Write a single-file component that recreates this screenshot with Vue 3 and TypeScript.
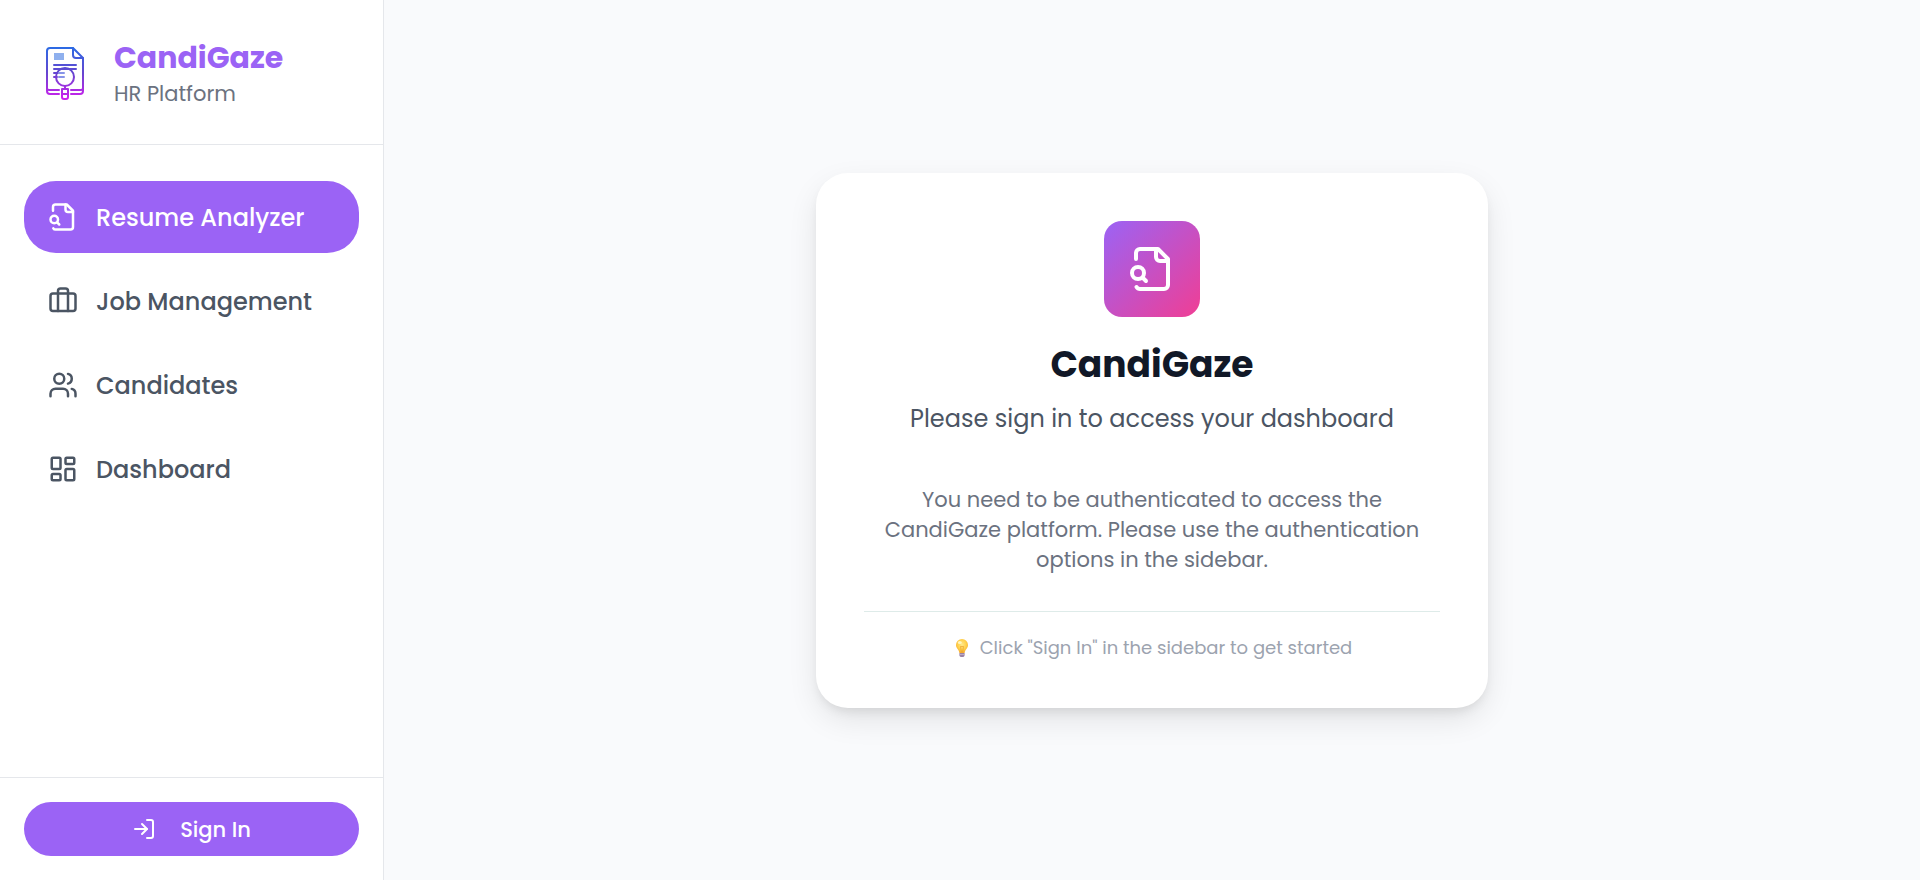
<script setup lang="ts">
type NavItem = { label: string; icon: string; active: boolean }

const navItems: NavItem[] = [
  { label: 'Resume Analyzer', icon: 'search', active: true },
  { label: 'Job Management', icon: 'case', active: false },
  { label: 'Candidates', icon: 'people', active: false },
  { label: 'Dashboard', icon: 'grid', active: false },
]
</script>

<template>
  <div class="layout">
    <aside class="sidebar">
      <header class="brand">
        <svg class="logo" viewBox="0 0 60 60" fill="none" stroke-linecap="round" stroke-linejoin="round" aria-hidden="true">
          <defs>
            <linearGradient id="logo-stroke" gradientUnits="userSpaceOnUse" x1="0" y1="5" x2="0" y2="57">
              <stop offset="0" stop-color="#2b6be4" />
              <stop offset="0.5" stop-color="#6545cf" />
              <stop offset="1" stop-color="#cf20ee" />
            </linearGradient>
          </defs>
          <rect x="18" y="11" width="10" height="7" fill="#8fb0ee" />
          <g stroke="url(#logo-stroke)" stroke-width="2">
            <path d="M23 52H14a3 3 0 0 1-3-3V9a3 3 0 0 1 3-3h23l10 10v33a3 3 0 0 1-3 3h-9" />
            <path d="M37 6v7a3 3 0 0 0 3 3h7M11 46a2 2 0 0 0 2 2h10M35 48h10a2 2 0 0 0 2-2" />
            <path d="M18 23h22M18 27h22M18 31h4M18 35h3" />
            <circle cx="29" cy="35" r="9" />
            <path d="M29 44v3M26 47h6v8a2 2 0 0 1-2 2h-2a2 2 0 0 1-2-2zM26 52h6" />
          </g>
          <path d="M23 31h5M23 35h5" stroke="#8794e8" stroke-width="2" />
        </svg>
        <div>
          <div class="brand-name">CandiGaze</div>
          <div class="brand-sub">HR Platform</div>
        </div>
      </header>

      <nav class="nav" aria-label="Main">
        <a
          v-for="item in navItems"
          :key="item.label"
          href="#"
          class="nav-item"
          :class="{ active: item.active }"
          :aria-current="item.active ? 'page' : undefined"
        >
          <svg class="line-icon nav-icon" viewBox="0 0 24 24" aria-hidden="true">
            <template v-if="item.icon === 'search'">
              <path d="M14 2v4a2 2 0 0 0 2 2h4" />
              <path d="M4.268 21a2 2 0 0 0 1.727 1H18a2 2 0 0 0 2-2V7l-5-5H6a2 2 0 0 0-2 2v3" />
              <path d="m9 18-1.5-1.5" />
              <circle cx="5" cy="14" r="3" />
            </template>
            <template v-else-if="item.icon === 'case'">
              <path d="M16 20V4a2 2 0 0 0-2-2h-4a2 2 0 0 0-2 2v16" />
              <rect width="20" height="14" x="2" y="6" rx="2" />
            </template>
            <template v-else-if="item.icon === 'people'">
              <path d="M16 21v-2a4 4 0 0 0-4-4H6a4 4 0 0 0-4 4v2" />
              <circle cx="9" cy="7" r="4" />
              <path d="M22 21v-2a4 4 0 0 0-3-3.87" />
              <path d="M16 3.13a4 4 0 0 1 0 7.75" />
            </template>
            <template v-else>
              <rect width="7" height="9" x="3" y="3" rx="1" />
              <rect width="7" height="5" x="14" y="3" rx="1" />
              <rect width="7" height="9" x="14" y="12" rx="1" />
              <rect width="7" height="5" x="3" y="16" rx="1" />
            </template>
          </svg>
          <span>{{ item.label }}</span>
        </a>
      </nav>

      <footer class="account">
        <button type="button" class="sign-in">
          <svg class="line-icon sign-icon" viewBox="0 0 24 24" aria-hidden="true">
            <path d="M15 3h4a2 2 0 0 1 2 2v14a2 2 0 0 1-2 2h-4" />
            <path d="m10 17 5-5-5-5" />
            <path d="M15 12H3" />
          </svg>
          <span>Sign In</span>
        </button>
      </footer>
    </aside>

    <main class="content">
      <section class="card">
        <div class="tile">
          <svg class="line-icon tile-icon" viewBox="0 0 24 24" aria-hidden="true">
            <path d="M14 2v4a2 2 0 0 0 2 2h4" />
            <path d="M4.268 21a2 2 0 0 0 1.727 1H18a2 2 0 0 0 2-2V7l-5-5H6a2 2 0 0 0-2 2v3" />
            <path d="m9 18-1.5-1.5" />
            <circle cx="5" cy="14" r="3" />
          </svg>
        </div>
        <h1 class="title">CandiGaze</h1>
        <p class="subtitle">Please sign in to access your dashboard</p>
        <p class="message">
          You need to be authenticated to access the CandiGaze platform. Please use the authentication options in the sidebar.
        </p>
        <div class="hint">
          <svg class="bulb" viewBox="0 0 20 20" aria-hidden="true">
            <defs>
              <radialGradient id="bulb-glow" cx="0.5" cy="0.4" r="0.6">
                <stop offset="0" stop-color="#ffe98a" />
                <stop offset="0.6" stop-color="#ffd04a" />
                <stop offset="1" stop-color="#f5a92c" />
              </radialGradient>
            </defs>
            <path d="M10 1a6 6 0 0 0-6 6c0 3.3 3 4.5 3.4 8h5.200c.4-3.5 3.4-4.7 3.4-8a6 6 0 0 0-6-6z" fill="url(#bulb-glow)" />
            <path d="M8.5 8.5l1 6M11.500 8.5l-1 6M8.5 8.5h3" stroke="#ed9f2d" stroke-width="0.7" fill="none" />
            <ellipse cx="7.8" cy="4.5" rx="2" ry="1.5" fill="#fff5c0" />
            <path d="M7.4 15h5.200v2.5a2 2 0 0 1-2 1.5H9.400a2 2 0 0 1-2-1.5z" fill="#9b83a5" />
            <path d="M7.5 16.5h5" stroke="#c5b3cc" stroke-width="0.8" />
          </svg>
          <span>Click "Sign In" in the sidebar to get started</span>
        </div>
      </section>
    </main>
  </div>
</template>

<style>
body {
  margin: 0;
}
</style>

<style scoped>
.layout {
  display: flex;
  min-height: 100vh;
  background: #f9fafc;
  font-family: Poppins, Inter, "Open Sans", sans-serif;
  color: #4b5563;
}

.sidebar {
  display: flex;
  flex-direction: column;
  box-sizing: border-box;
  width: 384px;
  flex-shrink: 0;
  background: #fff;
  border-right: 1px solid #e5e7eb;
}

.brand {
  display: flex;
  align-items: center;
  gap: 18px;
  padding: 36px;
  border-bottom: 1px solid #e5e7eb;
}

.logo {
  width: 60px;
  height: 60px;
}

.brand-name {
  font-size: 30px;
  font-weight: 700;
  line-height: 44px;
  color: #9b63f5;
}

.brand-sub {
  font-size: 21px;
  line-height: 28px;
  color: #6b7280;
}

.nav {
  display: flex;
  flex: 1;
  flex-direction: column;
  gap: 12px;
  padding: 36px 24px;
}

.nav-item {
  display: flex;
  align-items: center;
  gap: 18px;
  height: 72px;
  padding: 0 24px;
  border-radius: 32px;
  color: #4b5563;
  font-size: 24px;
  font-weight: 500;
  text-decoration: none;
  white-space: nowrap;
}

.nav-item.active {
  background: #9b63f5;
  color: #fff;
}

.line-icon {
  flex-shrink: 0;
  fill: none;
  stroke: currentColor;
  stroke-width: 2;
  stroke-linecap: round;
  stroke-linejoin: round;
}

.nav-icon {
  width: 30px;
  height: 30px;
}

.account {
  padding: 24px;
  border-top: 1px solid #e5e7eb;
}

.sign-in {
  display: flex;
  align-items: center;
  justify-content: center;
  gap: 24px;
  width: 100%;
  height: 54px;
  padding: 0;
  border: 0;
  border-radius: 27px;
  background: #9b63f5;
  color: #fff;
  font-family: inherit;
  font-size: 21px;
  font-weight: 500;
}

.sign-icon {
  width: 24px;
  height: 24px;
}

.content {
  display: flex;
  flex: 1;
  align-items: center;
  justify-content: center;
  padding: 24px;
}

.card {
  box-sizing: border-box;
  width: 100%;
  max-width: 672px;
  padding: 48px;
  border-radius: 32px;
  background: #fff;
  box-shadow: 0 12px 32px -3px rgba(0, 0, 0, 0.11), 0 6px 12px -4px rgba(0, 0, 0, 0.1);
  text-align: center;
}

.tile {
  display: flex;
  align-items: center;
  justify-content: center;
  width: 96px;
  height: 96px;
  margin: 0 auto 24px;
  border-radius: 18px;
  background: linear-gradient(135deg, #9b63f5, #f03e94);
  color: #fff;
}

.tile-icon {
  width: 48px;
  height: 48px;
}

.title {
  margin: 0 0 12px;
  color: #111827;
  font-size: 36px;
  font-weight: 700;
  line-height: 48px;
}

.subtitle {
  margin: 0 0 48px;
  font-size: 24px;
  line-height: 36px;
}

.message {
  margin: 0;
  padding: 0 12px;
  color: #6b7280;
  font-size: 21px;
  line-height: 30px;
}

.hint {
  display: flex;
  align-items: center;
  justify-content: center;
  gap: 8px;
  margin-top: 36px;
  padding-top: 24px;
  border-top: 1px solid #deebe9;
  color: #9ca3af;
  font-size: 18px;
  line-height: 24px;
}

.bulb {
  width: 20px;
  height: 20px;
}
</style>
